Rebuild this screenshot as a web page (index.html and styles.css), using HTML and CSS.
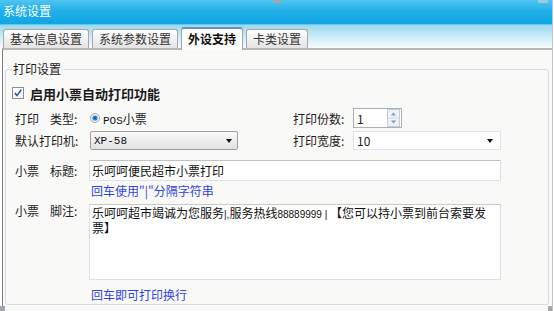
FILE: index.html
```html
<!DOCTYPE html>
<html lang="zh-CN">
<head>
    <meta charset="UTF-8">
    <title>系统设置</title>
    <link rel="stylesheet" href="styles.css">
</head>
<body>
    <div class="window">
        <div class="titlebar">系统设置</div>
        <span class="grip grip-top1"></span>
        <span class="grip grip-top2"></span>

        <div class="tabbar">
            <div class="tab">基本信息设置</div>
            <div class="tab">系统参数设置</div>
            <div class="tab active">外设支持</div>
            <div class="tab">卡类设置</div>
        </div>

        <div class="content">
            <fieldset class="group">
                <legend>打印设置</legend>

                <div class="row row-check">
                    <svg class="checkbox" width="12" height="12" viewBox="0 0 12 12">
                        <rect x="0.5" y="0.5" width="11" height="11" fill="#fbfbfb" stroke="#8c8e90"/>
                        <path d="M2.8 6 L5 8.6 L9.2 2.8" fill="none" stroke="#2a4db8" stroke-width="1.5"/>
                    </svg>
                    <span class="check-label">启用小票自动打印功能</span>
                </div>

                <div class="row row-type">
                    <div class="cell">
                        <span class="label"><span class="lab-a">打印</span>类型:</span>
                        <svg class="radio" width="10" height="10" viewBox="0 0 10 10">
                            <circle cx="5" cy="5" r="4.5" fill="#eef1f4" stroke="#a4aab0"/>
                            <circle cx="5" cy="5" r="2.6" fill="#2f86d2"/>
                            <circle cx="5" cy="5" r="1.1" fill="#1b4f8e"/>
                        </svg>
                        <span><span class="mono">POS</span>小票</span>
                    </div>
                    <div class="cell-r">
                        <span class="label-r">打印份数:</span>
                        <div class="spin">
                            <span class="spin-val">1</span>
                            <svg class="spin-btn" width="13" height="18" viewBox="0 0 13 18">
                                <rect x="0.5" y="0.5" width="12" height="17" fill="#eef2f6" stroke="#c3cbd3"/>
                                <line x1="1" y1="9" x2="12" y2="9" stroke="#d3d9df"/>
                                <path d="M4 6.5 L6.5 3.5 L9 6.5 Z" fill="#7f9cbc"/>
                                <path d="M4 11.5 L6.5 14.5 L9 11.5 Z" fill="#7f9cbc"/>
                            </svg>
                        </div>
                    </div>
                </div>

                <div class="row row-printer">
                    <div class="cell">
                        <span class="label">默认打印机:</span>
                        <div class="select select-grey">
                            <span class="mono">XP-58</span>
                            <span class="arrow"></span>
                        </div>
                    </div>
                    <div class="cell-r">
                        <span class="label-r">打印宽度:</span>
                        <div class="select select-white">
                            <span>10</span>
                            <span class="arrow"></span>
                        </div>
                    </div>
                </div>

                <div class="row row-title">
                    <span class="label"><span class="lab-a">小票</span>标题:</span>
                    <div class="field">乐呵呵便民超市小票打印</div>
                </div>
                <div class="hint">回车使用"|"分隔字符串</div>

                <div class="row row-foot">
                    <span class="label"><span class="lab-a">小票</span>脚注:</span>
                    <div class="memo">乐呵呵超市竭诚为您服务<span class="narrow">|,</span>服务热线<span class="narrow">88889999 | </span>【您可以持小票到前台索要发<br>票】</div>
                </div>
                <div class="hint hint-last">回车即可打印换行</div>
            </fieldset>
        </div>

        <span class="grip grip-bl"></span>
        <span class="grip grip-br"></span>
    </div>
</body>
</html>
```

FILE: styles.css
```css
* {
    box-sizing: border-box;
}

body {
    margin: 0;
    background: #ffffff;
    font-family: "Noto Sans CJK SC", "Noto Sans", sans-serif;
    font-size: 12px;
    color: #222222;
}

.window {
    position: relative;
    width: 553px;
    height: 311px;
    border-right: 1px solid #c6c6c6;
    display: flex;
    flex-direction: column;
    overflow: hidden;
}

.titlebar {
    height: 25px;
    padding: 3px 0 0 3px;
    line-height: 16px;
    color: #ffffff;
    background: linear-gradient(#50c4f0, #22b0e8 45%, #0fa5e4);
    border-bottom: 1px solid #62c8ee;
}

.grip {
    position: absolute;
    background: #a6a8b0;
}

.grip-top1 { left: 273px; top: 0; width: 8px; height: 3px; }
.grip-top2 { left: 538px; top: 0; width: 10px; height: 3px; background: #9fc9dc; }
.grip-bl { left: 0; top: 306px; width: 5px; height: 5px; }
.grip-br { left: 548px; top: 306px; width: 5px; height: 5px; }

.tabbar {
    position: relative;
    z-index: 1;
    height: 23px;
    padding-left: 3px;
    display: flex;
    align-items: flex-end;
    gap: 3px;
    background: linear-gradient(#9cd8f0, #d4eef8 60%, #f7fbfc);
}

.tab {
    height: 19px;
    padding: 0 6px;
    line-height: 18px;
    color: #333333;
    border: 1px solid #a8a8a8;
    border-bottom: none;
    border-radius: 3px 3px 0 0;
    background: linear-gradient(#fdfdfd, #e4e4e4);
}

.tab.active {
    height: 23px;
    margin-bottom: -2px;
    line-height: 19px;
    font-weight: bold;
    color: #111111;
    background: #fdfdfc;
    border-color: #98a8b8;
    border-top: 2px solid #6f90b6;
}

.content {
    flex: 1;
    margin-left: 2px;
    border-left: 1px solid #7c7c7c;
    border-top: 2px solid #b8b8b8;
    background: #f9f9f7;
}

.group {
    margin: 12px 3px 0 2px;
    padding: 0 0 2px 0;
    min-width: 0;
    border: 1px solid #d4dbe2;
    border-radius: 3px;
}

.group legend {
    margin-left: 6px;
    padding: 0 1px;
    line-height: 14px;
    color: #222222;
}

.row {
    display: flex;
    align-items: center;
    padding-left: 9px;
}

.row-check {
    height: 14px;
    margin-top: 10px;
    padding-left: 6px;
}

.checkbox {
    margin-right: 6px;
}

.check-label {
    font-size: 13px;
    font-weight: bold;
    color: #1a1a1a;
}

.row-type {
    height: 20px;
    margin-top: 8px;
}

.row-printer {
    height: 19px;
    margin-top: 3px;
}

.row-title {
    height: 21px;
    margin-top: 10px;
}

.row-foot {
    align-items: flex-start;
    margin-top: 6px;
}

.cell {
    width: 278px;
    flex-shrink: 0;
    display: flex;
    align-items: center;
}

.cell-r {
    display: flex;
    align-items: center;
}

.label {
    width: 74px;
    flex-shrink: 0;
    line-height: 13px;
}

.lab-a {
    display: inline-block;
    width: 35px;
}

.label-r {
    width: 60px;
    flex-shrink: 0;
}

.radio {
    margin: 0 3px 0 1px;
}

.mono {
    font-family: "Liberation Mono", monospace;
    font-size: 11px;
    color: #111111;
}

.spin {
    width: 49px;
    height: 20px;
    display: flex;
    align-items: center;
    justify-content: space-between;
    padding: 0 1px 0 3px;
    background: #ffffff;
    border: 1px solid #a9b0b8;
}

.select {
    height: 19px;
    display: flex;
    align-items: center;
    justify-content: space-between;
    padding-left: 3px;
}

.select-grey {
    width: 148px;
    margin-left: 1px;
    padding-right: 5px;
    border: 1px solid #9e9e9e;
    border-radius: 2px;
    background: linear-gradient(#fafafa, #e2e2e2);
}

.select-white {
    width: 148px;
    padding-right: 7px;
    background: #ffffff;
    border: 1px solid #dfe3e7;
}

.arrow {
    width: 0;
    height: 0;
    border-left: 3.5px solid transparent;
    border-right: 3.5px solid transparent;
    border-top: 4px solid #111111;
}

.field {
    width: 412px;
    height: 21px;
    padding: 0 2px;
    line-height: 19px;
    color: #111111;
    background: #ffffff;
    border: 1px solid #dbe1e6;
    border-top-color: #c2c2c2;
}

.memo {
    width: 412px;
    height: 76px;
    padding: 1px 2px;
    line-height: 13px;
    white-space: nowrap;
    overflow: hidden;
    color: #111111;
    background: #ffffff;
    border: 1px solid #dbe1e6;
    border-top-color: #c8c8c8;
}

.narrow {
    font-family: "Liberation Sans", sans-serif;
    font-size: 10px;
}

.hint {
    height: 14px;
    margin-top: 3px;
    padding-left: 85px;
    line-height: 14px;
    color: #2f45e6;
}

.hint-last {
    margin-top: 8px;
}
```
